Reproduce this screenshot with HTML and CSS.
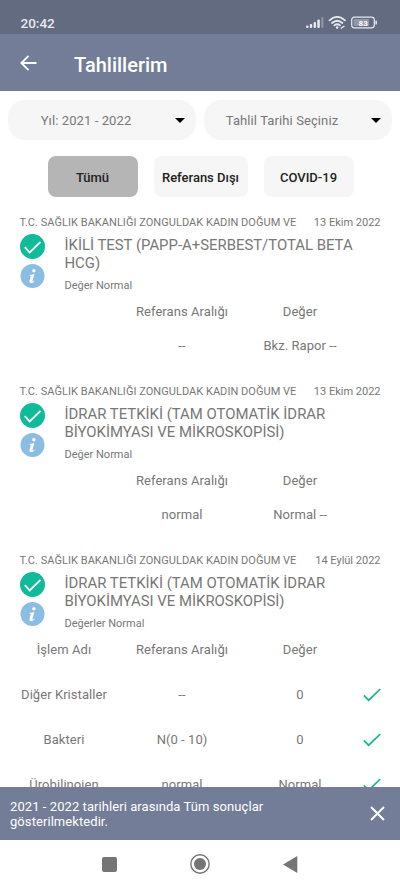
FILE: index.html
```html
<!DOCTYPE html>
<html lang="tr">
<head>
<meta charset="utf-8">
<title>Tahlillerim</title>
<link rel="stylesheet" href="styles.css">
</head>
<body>
<svg width="0" height="0" class="defs">
  <symbol id="ok" viewBox="0 0 24 24"><circle cx="12" cy="12" r="12" fill="#10bb99"/><path d="M4.6 12.6l4.7 5L19.7 7.6" fill="none" stroke="#fff" stroke-width="1.8"/></symbol>
  <symbol id="info" viewBox="0 0 24 24"><circle cx="12" cy="12" r="12" fill="#8bbde2"/><circle cx="13.4" cy="6.8" r="1.7" fill="#fff"/><path d="M9.2 11q2.4-.2 4.7-.9l-2 6.8q-.2 1.2 1.7-.5l.5.5q-2 2.5-4 2.2-1.7-.3-1.1-2.3l1.2-4q.3-1-1-1z" fill="#fff"/></symbol>
  <symbol id="tick" viewBox="0 0 18 14"><path d="M.8 7.3l4.9 4.9L17.3 1" fill="none" stroke="#13b797" stroke-width="1.7"/></symbol>
</svg>
<div class="screen">
  <div class="status">
    <span class="time">20:42</span>
    <svg class="signals" width="72" height="14" viewBox="0 0 72 14">
      <g fill="#e8eaf0"><rect x="0" y="9.5" width="2.5" height="2.5" rx="1"/><rect x="3.8" y="8" width="2.4" height="4" rx="1"/><rect x="7.6" y="6" width="2.4" height="6" rx="1"/><rect x="11.3" y="3.6" width="2.5" height="8.4" rx="1"/><rect x="15.3" y="1" width="2.1" height="11" rx="1" opacity=".35"/></g>
      <g fill="none" stroke="#e8eaf0" stroke-width="1.8" stroke-linecap="round"><path d="M23.5 4.3q7.7-6.8 15.4 0"/><path d="M26 7q5.2-4.5 10.4 0"/><path d="M28.4 9.4q2.8-2.3 5.6 0"/></g>
      <circle cx="31.2" cy="11.6" r="1.3" fill="#e8eaf0"/><path d="M34.7 12.5l3.8-2.5" stroke="#e8eaf0" stroke-width="1.4"/>
      <rect x="45.7" y="1.2" width="22.6" height="10.6" rx="2.8" fill="none" stroke="#e8eaf0" stroke-width="1.2"/><rect x="47.5" y="3" width="15.5" height="7" rx="1" fill="#9298a8"/><rect x="69.4" y="4.6" width="1.5" height="4" rx=".7" fill="#e8eaf0"/>
      <text x="57.2" y="9.6" class="battery" text-anchor="middle">83</text>
    </svg>
  </div>
  <header class="bar">
    <svg width="17" height="16" viewBox="0 0 17 16" fill="none" stroke="#fff" stroke-width="1.9"><path d="M16.5 8H1.5M8.5 .8L1.4 8l7.1 7.2"/></svg>
    <h1>Tahlillerim</h1>
  </header>
  <main class="content">
    <div class="filters">
      <div class="select"><span>Yıl: 2021 - 2022</span><i class="caret"></i></div>
      <div class="select"><span>Tahlil Tarihi Seçiniz</span><i class="caret"></i></div>
    </div>
    <div class="tabs">
      <div class="tab active">Tümü</div>
      <div class="tab wide">Referans Dışı</div>
      <div class="tab">COVID-19</div>
    </div>
    <section class="result">
      <div class="origin"><span class="org">T.C. SAĞLIK BAKANLIĞI ZONGULDAK KADIN DOĞUM VE</span><span class="date">13 Ekim 2022</span></div>
      <div class="summary">
        <div class="icons"><svg class="ok"><use href="#ok"/></svg><svg class="info"><use href="#info"/></svg></div>
        <div><h2>İKİLİ TEST (PAPP-A+SERBEST/TOTAL BETA<br>HCG)</h2><p>Değer Normal</p></div>
      </div>
      <div class="row head"><span></span><span>Referans Aralığı</span><span>Değer</span></div>
      <div class="row single"><span></span><span>--</span><span>Bkz. Rapor --</span></div>
    </section>
    <section class="result">
      <div class="origin"><span class="org">T.C. SAĞLIK BAKANLIĞI ZONGULDAK KADIN DOĞUM VE</span><span class="date">13 Ekim 2022</span></div>
      <div class="summary">
        <div class="icons"><svg class="ok"><use href="#ok"/></svg><svg class="info"><use href="#info"/></svg></div>
        <div><h2>İDRAR TETKİKİ (TAM OTOMATİK İDRAR<br>BİYOKİMYASI VE MİKROSKOPİSİ)</h2><p>Değer Normal</p></div>
      </div>
      <div class="row head"><span></span><span>Referans Aralığı</span><span>Değer</span></div>
      <div class="row single"><span></span><span>normal</span><span>Normal --</span></div>
    </section>
    <section class="result">
      <div class="origin"><span class="org">T.C. SAĞLIK BAKANLIĞI ZONGULDAK KADIN DOĞUM VE</span><span class="date">14 Eylül 2022</span></div>
      <div class="summary">
        <div class="icons"><svg class="ok"><use href="#ok"/></svg><svg class="info"><use href="#info"/></svg></div>
        <div><h2>İDRAR TETKİKİ (TAM OTOMATİK İDRAR<br>BİYOKİMYASI VE MİKROSKOPİSİ)</h2><p>Değerler Normal</p></div>
      </div>
      <div class="row head"><span>İşlem Adı</span><span>Referans Aralığı</span><span>Değer</span></div>
      <div class="row"><span>Diğer Kristaller</span><span>--</span><span>0</span><svg class="tick"><use href="#tick"/></svg></div>
      <div class="row"><span>Bakteri</span><span>N(0 - 10)</span><span>0</span><svg class="tick"><use href="#tick"/></svg></div>
      <div class="row"><span>Ürobilinojen</span><span>normal</span><span>Normal</span><svg class="tick"><use href="#tick"/></svg></div>
    </section>
  </main>
  <div class="notice">
    <p>2021 - 2022 tarihleri arasında Tüm sonuçlar<br>gösterilmektedir.</p>
    <svg width="15" height="15" viewBox="0 0 15 15"><path d="M1 1l13 13M14 1L1 14" stroke="#fff" stroke-width="1.9"/></svg>
  </div>
  <nav class="nav">
    <svg width="15" height="15" viewBox="0 0 15 15"><rect width="15" height="15" rx="2" fill="#757575"/></svg>
    <svg width="20" height="20" viewBox="0 0 20 20"><circle cx="10" cy="10" r="9.2" fill="none" stroke="#757575" stroke-width="1.4"/><circle cx="10" cy="10" r="6" fill="#757575"/></svg>
    <svg width="15" height="17" viewBox="0 0 15 17"><path d="M0 8.5L14.3 0v17z" fill="#757575"/></svg>
  </nav>
</div>
</body>
</html>
```
FILE: styles.css
```css
* { box-sizing: border-box; }
body, h1, h2, p { margin: 0; font-weight: 400; }
body { font-family: Roboto, sans-serif; background: #fff; color: #777; }
.defs { position: absolute; }
svg { display: block; flex: none; }
.screen { width: 400px; height: 888px; display: flex; flex-direction: column; overflow: hidden; }
.status { height: 34px; flex: none; background: #636b80; padding: 12px 22px 0 20.5px; display: flex; justify-content: space-between; color: #e8eaf0; }
.time { font-size: 13.5px; line-height: 22px; font-weight: 500; }
.signals { margin-top: 4px; }
.battery { font-size: 8px; font-weight: 700; fill: #fff; }
.bar { height: 57px; flex: none; background: #737d97; display: flex; align-items: center; padding: 0 20px; gap: 37px; color: #fff; }
.bar h1 { font-size: 20px; font-weight: 500; line-height: 24px; padding-top: 4px; }
.content { flex: 1; min-height: 0; overflow: hidden; padding-top: 9px; }
.filters { display: flex; gap: 8px; padding: 0 8px; }
.select { width: 188px; height: 40px; border-radius: 17px; background: #f6f6f6; display: flex; align-items: center; padding-right: 11px; font-size: 13px; letter-spacing: .1px; }
.select span { flex: 1; text-align: center; padding-right: 11px; }
.caret { border: 5px solid transparent; border-top-color: #000; border-bottom: 0; }
.tabs { display: flex; justify-content: center; gap: 16px; margin-top: 16px; padding-left: 1px; height: 41px; }
.tab { width: 90px; border-radius: 8px; background: #f6f6f6; color: #222; font-size: 13px; font-weight: 500; display: flex; align-items: center; justify-content: center; padding-top: 1px; }
.tab.wide { width: 94px; }
.tab.active { background: #b5b5b5; }
.tabs + .result { margin-top: 16px; }
.result { height: 169px; }
.origin { display: flex; justify-content: space-between; padding: 1px 19.5px 0; font-size: 11px; line-height: 18px; white-space: nowrap; }
.org { letter-spacing: .04px; }
.summary { display: flex; gap: 20px; padding: 2px 19.5px 0; height: 65px; }
.icons { width: 25px; }
.ok { width: 25px; height: 25px; }
.info { width: 25px; height: 24px; margin-top: 5px; }
.summary h2 { font-size: 14.9px; line-height: 17.5px; padding-top: 3px; white-space: nowrap; }
.summary p { font-size: 11px; line-height: 16px; margin-top: 6px; }
.row { display: grid; grid-template-columns: 118px 118px 118px 26px; padding-left: 5px; height: 45px; align-items: center; text-align: center; font-size: 13px; letter-spacing: .06px; }
.row.head { height: 28px; }
.head + .row { margin-top: 9px; }
.head + .row.single { height: 39px; margin-top: 1px; }
.tick { width: 18px; height: 14px; margin-left: 4px; }
.notice { height: 53px; flex: none; background: #737d97; color: #fff; display: flex; align-items: center; justify-content: space-between; padding: 0 15px 0 10px; font-size: 13px; line-height: 15px; letter-spacing: .07px; }
.nav { height: 48px; flex: none; display: flex; align-items: center; justify-content: center; gap: 73px; padding-right: 1px; }
```
